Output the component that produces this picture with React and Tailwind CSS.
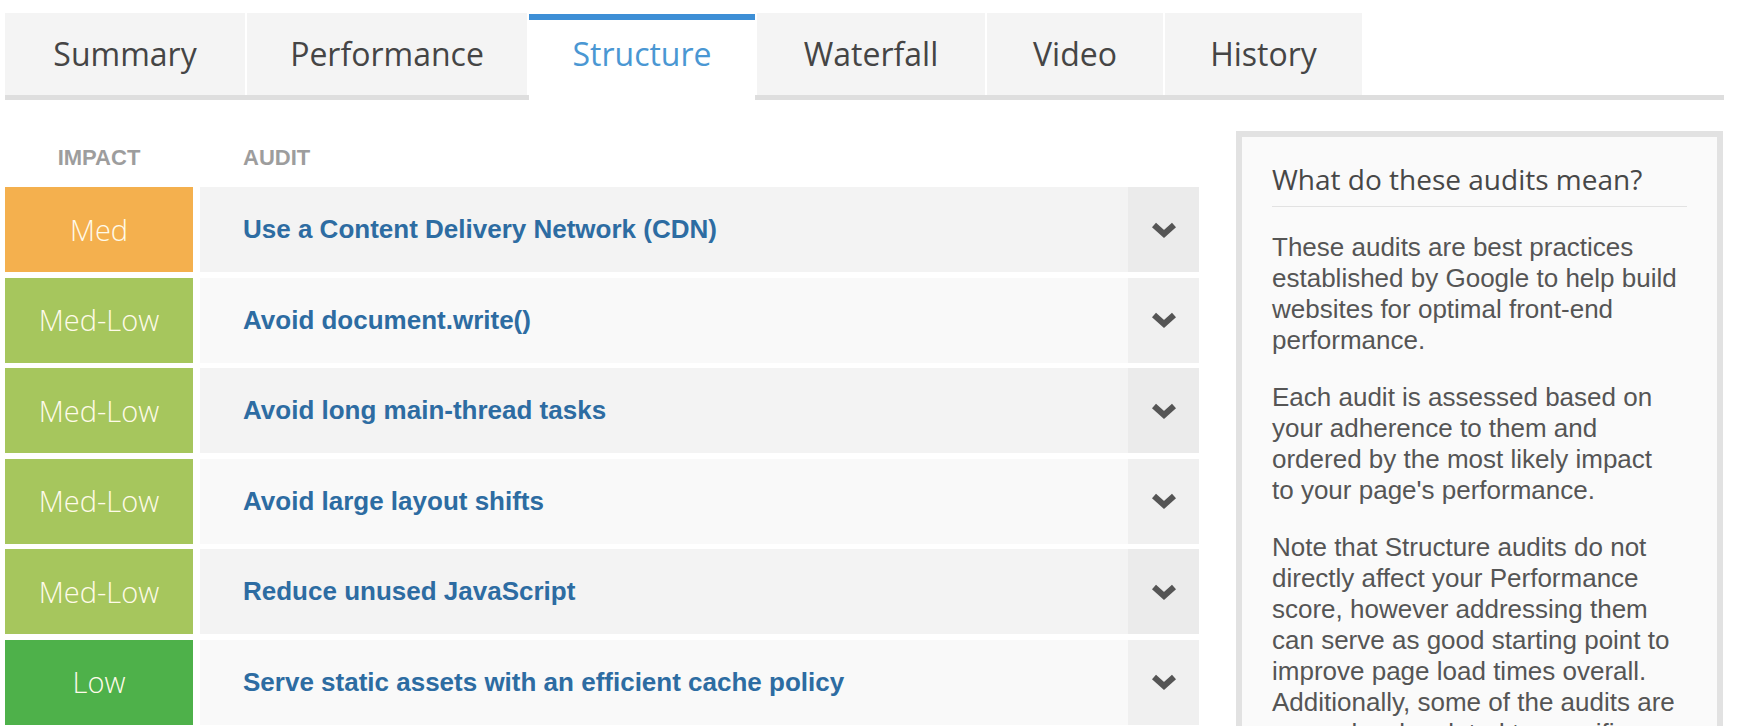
import React from 'react'

const tabs = [
  { label: 'Summary', w: 'w-[240px]' },
  { label: 'Performance', w: 'w-[280px]' },
  { label: 'Structure', w: 'w-[226px]', active: true },
  { label: 'Waterfall', w: 'w-[228px]' },
  { label: 'Video', w: 'w-[176px]' },
  { label: 'History', w: 'w-[197px]' }
]

const audits = [
  { impact: 'Med', color: 'bg-[#f4b04e]', title: 'Use a Content Delivery Network (CDN)' },
  { impact: 'Med-Low', color: 'bg-[#a6c65d]', title: 'Avoid document.write()' },
  { impact: 'Med-Low', color: 'bg-[#a6c65d]', title: 'Avoid long main-thread tasks' },
  { impact: 'Med-Low', color: 'bg-[#a6c65d]', title: 'Avoid large layout shifts' },
  { impact: 'Med-Low', color: 'bg-[#a6c65d]', title: 'Reduce unused JavaScript' },
  { impact: 'Low', color: 'bg-[#4eb14a]', title: 'Serve static assets with an efficient cache policy' }
]

const paragraphs = [
  [
    'These audits are best practices',
    'established by Google to help build',
    'websites for optimal front-end',
    'performance.'
  ],
  [
    'Each audit is assessed based on',
    'your adherence to them and',
    'ordered by the most likely impact',
    "to your page's performance."
  ],
  [
    'Note that Structure audits do not',
    'directly affect your Performance',
    'score, however addressing them',
    'can serve as good starting point to',
    'improve page load times overall.',
    'Additionally, some of the audits are',
    'more closely related to specific',
    'metrics than others.'
  ]
]

function Chevron() {
  return (
    <svg width="28" height="18" viewBox="0 0 28 18" fill="none">
      <polyline points="4,4 14,13 24,4" stroke="#555555" strokeWidth="6" strokeLinejoin="miter" />
    </svg>
  )
}

function Tabs() {
  return (
    <div className="h-[87px] border-b-[5px] border-[#dedede]">
      <div className="flex gap-[2px] h-[82px] items-start">
        {tabs.map((t) =>
          t.active ? (
            <div
              key={t.label}
              className={`${t.w} relative z-10 mt-[1px] h-[86px] bg-white border-t-[6px] border-[#3d8fd6] flex items-center justify-center pb-[12px] text-[32px] text-[#4a97d3]`}
            >
              {t.label}
            </div>
          ) : (
            <div
              key={t.label}
              className={`${t.w} h-[82px] bg-[#f4f4f4] flex items-center justify-center text-[32px] text-[#454545]`}
            >
              {t.label}
            </div>
          )
        )}
      </div>
    </div>
  )
}

function AuditTable() {
  return (
    <div className="w-[1194px]">
      <div className="flex items-center h-[52px] font-['Liberation_Sans',Arial,sans-serif] font-bold text-[22px] text-[#9d9d9d]">
        <div className="w-[188px] text-center">IMPACT</div>
        <div className="pl-[50px]">AUDIT</div>
      </div>
      <div className="mt-[4px] flex flex-col gap-[5.5px]">
        {audits.map((a, i) => (
          <div key={i} className="flex h-[85px]">
            <div
              className={`${a.color} w-[188px] flex items-center justify-center text-[29px] font-light text-[#fffbea]`}
            >
              {a.impact}
            </div>
            <div
              className={`ml-[7px] flex-1 flex items-center pl-[43px] font-['Liberation_Sans',Arial,sans-serif] font-bold text-[26px] text-[#2d6ca2] ${
                i % 2 === 0 ? 'bg-[#f3f3f3]' : 'bg-[#f9f9f9]'
              }`}
            >
              {a.title}
            </div>
            <div
              className={`w-[71px] flex items-center justify-center ${
                i % 2 === 0 ? 'bg-[#ebebeb]' : 'bg-[#f0f0f0]'
              }`}
            >
              <Chevron />
            </div>
          </div>
        ))}
      </div>
    </div>
  )
}

function Sidebar() {
  return (
    <div className="w-[487px] border-[6px] border-[#e2e2e2] bg-[#fafafa] px-[30px] pt-[24px]">
      <div className="text-[28px] leading-[36px] text-[#474747] pb-[9px] border-b border-[#e2e2e2]">
        What do these audits mean?
      </div>
      <div className="mt-[25px] flex flex-col gap-[26px] font-['Liberation_Sans',Arial,sans-serif] text-[26px] leading-[31px] text-[#555555]">
        {paragraphs.map((p, i) => (
          <p key={i}>
            {p.map((line) => (
              <span key={line} className="block whitespace-nowrap">
                {line}
              </span>
            ))}
          </p>
        ))}
      </div>
    </div>
  )
}

export default function App() {
  return (
    <div className="w-[1750px] h-[726px] overflow-hidden bg-white pl-[5px] pt-[13px] font-['Open_Sans',sans-serif]">
      <div className="w-[1719px]">
        <Tabs />
        <div className="mt-[31px] flex gap-[37px] items-start">
          <AuditTable />
          <Sidebar />
        </div>
      </div>
    </div>
  )
}
